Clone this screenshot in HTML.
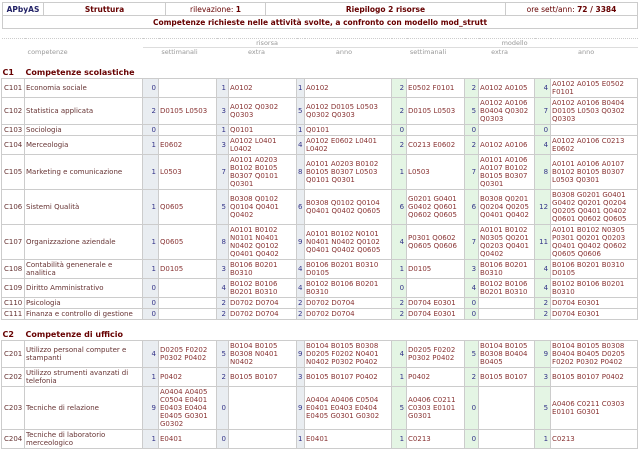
<!DOCTYPE html>
<html><head><meta charset="utf-8">
<style>
body{margin:0;background:#fff;font-family:"DejaVu Sans","Liberation Sans",sans-serif;font-size:7px;color:#633;}
table{border-collapse:collapse;}
#h{position:absolute;left:2px;top:2px;width:635px;table-layout:fixed;border:1px solid #ccc;}
#h td{border:1px solid #ccc;height:12px;padding:0 3px;font-size:7.5px;text-align:center;color:#600;}
#h b{font-weight:bold;}
#t{position:absolute;left:1px;top:38px;width:636px;table-layout:fixed;}
#t td{border:1px solid #ccc;padding:1px 1px 1px 1px;line-height:8px;vertical-align:middle;color:#833;overflow:hidden;}
#t td.c{color:#633;padding-left:2px;}
#t td.n{color:#338;text-align:right;padding-right:2px;background:#e9edf1;}
#t td.m{color:#338;text-align:right;padding-right:2px;background:#e4f5e4;}
#t td.x{color:#633;}
#t tr.hd td{border:none;color:#999;font-size:6.5px;text-align:center;height:8px;padding:0;}
#t tr.sec td{border:none;font-weight:bold;font-size:8px;color:#600;height:10px;padding:0 1px;}
#t tr.sp td{border:none;height:10px;padding:0;}
</style></head><body>
<table id="h">
<colgroup><col style="width:41px"><col style="width:122px"><col style="width:100px"><col style="width:240px"><col style="width:132px"></colgroup>
<tr><td style="color:#226;font-weight:bold">APbyAS</td><td><b>Struttura</b></td><td>rilevazione: <b>1</b></td><td><b>Riepilogo 2 risorse</b></td><td>ore sett/ann: <b>72 / 3384</b></td></tr>
<tr><td colspan="5"><b>Competenze richieste nelle attività svolte, a confronto con modello mod_strutt</b></td></tr>
</table>
<table id="t">
<colgroup><col style="width:23px"><col style="width:118px"><col style="width:16px"><col style="width:58px"><col style="width:12px"><col style="width:68px"><col style="width:8px"><col style="width:87px"><col style="width:15px"><col style="width:58px"><col style="width:14px"><col style="width:56px"><col style="width:16px"><col style="width:87px"></colgroup>
<tr class="hd"><td colspan="2" style="border-top:1px dotted #ccc"></td><td colspan="6" style="border-top:1px dotted #ccc;border-bottom:1px solid #ddd">risorsa</td><td colspan="6" style="border-top:1px dotted #ccc;border-bottom:1px solid #ddd">modello</td></tr>
<tr class="hd"><td colspan="2" style="text-align:left;padding-left:26px">competenze</td><td colspan="2">settimanali</td><td colspan="2">extra</td><td colspan="2">anno</td><td colspan="2">settimanali</td><td colspan="2">extra</td><td colspan="2">anno</td></tr>
<tr class="sp"><td colspan="14" style="height:12px"></td></tr>
<tr class="sec"><td>C1</td><td colspan="13">Competenze scolastiche</td></tr>
<tr><td class="c">C101</td><td class="x">Economia sociale</td><td class="n">0</td><td></td><td class="n">1</td><td>A0102</td><td class="n">1</td><td>A0102</td><td class="m">2</td><td>E0502 F0101</td><td class="m">2</td><td>A0102 A0105</td><td class="m">4</td><td>A0102 A0105 E0502 F0101</td></tr>
<tr><td class="c">C102</td><td class="x">Statistica applicata</td><td class="n">2</td><td>D0105 L0503</td><td class="n">3</td><td>A0102 Q0302 Q0303</td><td class="n">5</td><td>A0102 D0105 L0503 Q0302 Q0303</td><td class="m">2</td><td>D0105 L0503</td><td class="m">5</td><td>A0102 A0106 B0404 Q0302 Q0303</td><td class="m">7</td><td>A0102 A0106 B0404 D0105 L0503 Q0302 Q0303</td></tr>
<tr><td class="c">C103</td><td class="x">Sociologia</td><td class="n">0</td><td></td><td class="n">1</td><td>Q0101</td><td class="n">1</td><td>Q0101</td><td class="m">0</td><td></td><td class="m">0</td><td></td><td class="m">0</td><td></td></tr>
<tr><td class="c">C104</td><td class="x">Merceologia</td><td class="n">1</td><td>E0602</td><td class="n">3</td><td>A0102 L0401 L0402</td><td class="n">4</td><td>A0102 E0602 L0401 L0402</td><td class="m">2</td><td>C0213 E0602</td><td class="m">2</td><td>A0102 A0106</td><td class="m">4</td><td>A0102 A0106 C0213 E0602</td></tr>
<tr><td class="c">C105</td><td class="x">Marketing e comunicazione</td><td class="n">1</td><td>L0503</td><td class="n">7</td><td>A0101 A0203 B0102 B0105 B0307 Q0101 Q0301</td><td class="n">8</td><td>A0101 A0203 B0102 B0105 B0307 L0503 Q0101 Q0301</td><td class="m">1</td><td>L0503</td><td class="m">7</td><td>A0101 A0106 A0107 B0102 B0105 B0307 Q0301</td><td class="m">8</td><td>A0101 A0106 A0107 B0102 B0105 B0307 L0503 Q0301</td></tr>
<tr><td class="c">C106</td><td class="x">Sistemi Qualità</td><td class="n">1</td><td>Q0605</td><td class="n">5</td><td>B0308 Q0102 Q0104 Q0401 Q0402</td><td class="n">6</td><td>B0308 Q0102 Q0104 Q0401 Q0402 Q0605</td><td class="m">6</td><td>G0201 G0401 G0402 Q0601 Q0602 Q0605</td><td class="m">6</td><td>B0308 Q0201 Q0204 Q0205 Q0401 Q0402</td><td class="m">12</td><td>B0308 G0201 G0401 G0402 Q0201 Q0204 Q0205 Q0401 Q0402 Q0601 Q0602 Q0605</td></tr>
<tr><td class="c">C107</td><td class="x">Organizzazione aziendale</td><td class="n">1</td><td>Q0605</td><td class="n">8</td><td>A0101 B0102 N0101 N0401 N0402 Q0102 Q0401 Q0402</td><td class="n">9</td><td>A0101 B0102 N0101 N0401 N0402 Q0102 Q0401 Q0402 Q0605</td><td class="m">4</td><td>P0301 Q0602 Q0605 Q0606</td><td class="m">7</td><td>A0101 B0102 N0305 Q0201 Q0203 Q0401 Q0402</td><td class="m">11</td><td>A0101 B0102 N0305 P0301 Q0201 Q0203 Q0401 Q0402 Q0602 Q0605 Q0606</td></tr>
<tr><td class="c">C108</td><td class="x">Contabilità genenerale e analitica</td><td class="n">1</td><td>D0105</td><td class="n">3</td><td>B0106 B0201 B0310</td><td class="n">4</td><td>B0106 B0201 B0310 D0105</td><td class="m">1</td><td>D0105</td><td class="m">3</td><td>B0106 B0201 B0310</td><td class="m">4</td><td>B0106 B0201 B0310 D0105</td></tr>
<tr><td class="c">C109</td><td class="x">Diritto Amministrativo</td><td class="n">0</td><td></td><td class="n">4</td><td>B0102 B0106 B0201 B0310</td><td class="n">4</td><td>B0102 B0106 B0201 B0310</td><td class="m">0</td><td></td><td class="m">4</td><td>B0102 B0106 B0201 B0310</td><td class="m">4</td><td>B0102 B0106 B0201 B0310</td></tr>
<tr><td class="c">C110</td><td class="x">Psicologia</td><td class="n">0</td><td></td><td class="n">2</td><td>D0702 D0704</td><td class="n">2</td><td>D0702 D0704</td><td class="m">2</td><td>D0704 E0301</td><td class="m">0</td><td></td><td class="m">2</td><td>D0704 E0301</td></tr>
<tr><td class="c">C111</td><td class="x">Finanza e controllo di gestione</td><td class="n">0</td><td></td><td class="n">2</td><td>D0702 D0704</td><td class="n">2</td><td>D0702 D0704</td><td class="m">2</td><td>D0704 E0301</td><td class="m">0</td><td></td><td class="m">2</td><td>D0704 E0301</td></tr>
<tr class="sp"><td colspan="14" style="height:10px"></td></tr>
<tr class="sec"><td>C2</td><td colspan="13">Competenze di ufficio</td></tr>
<tr><td class="c">C201</td><td class="x">Utilizzo personal computer e stampanti</td><td class="n">4</td><td>D0205 F0202 P0302 P0402</td><td class="n">5</td><td>B0104 B0105 B0308 N0401 N0402</td><td class="n">9</td><td>B0104 B0105 B0308 D0205 F0202 N0401 N0402 P0302 P0402</td><td class="m">4</td><td>D0205 F0202 P0302 P0402</td><td class="m">5</td><td>B0104 B0105 B0308 B0404 B0405</td><td class="m">9</td><td>B0104 B0105 B0308 B0404 B0405 D0205 F0202 P0302 P0402</td></tr>
<tr><td class="c">C202</td><td class="x">Utilizzo strumenti avanzati di telefonia</td><td class="n">1</td><td>P0402</td><td class="n">2</td><td>B0105 B0107</td><td class="n">3</td><td>B0105 B0107 P0402</td><td class="m">1</td><td>P0402</td><td class="m">2</td><td>B0105 B0107</td><td class="m">3</td><td>B0105 B0107 P0402</td></tr>
<tr><td class="c">C203</td><td class="x">Tecniche di relazione</td><td class="n">9</td><td>A0404 A0405 C0504 E0401 E0403 E0404 E0405 G0301 G0302</td><td class="n">0</td><td></td><td class="n">9</td><td>A0404 A0406 C0504 E0401 E0403 E0404 E0405 G0301 G0302</td><td class="m">5</td><td>A0406 C0211 C0303 E0101 G0301</td><td class="m">0</td><td></td><td class="m">5</td><td>A0406 C0211 C0303 E0101 G0301</td></tr>
<tr><td class="c">C204</td><td class="x">Tecniche di laboratorio merceologico</td><td class="n">1</td><td>E0401</td><td class="n">0</td><td></td><td class="n">1</td><td>E0401</td><td class="m">1</td><td>C0213</td><td class="m">0</td><td></td><td class="m">1</td><td>C0213</td></tr>
</table>
</body></html>
